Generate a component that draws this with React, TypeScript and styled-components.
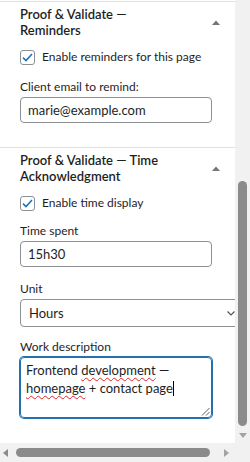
import React from 'react'
import styled, { createGlobalStyle } from 'styled-components'

const GlobalStyle = createGlobalStyle`
  html, body {
    margin: 0;
    padding: 0;
    background: #ffffff;
    overflow: hidden;
  }
  * {
    box-sizing: border-box;
  }
`

const FONT = `Lato, "Liberation Sans", sans-serif`
const TEXT = '#1e1e1e'
const BLUE = '#2271b1'

// scroll position of the sidebar, used for the fake scrollbars
const TRACK_V = 426
const THUMB_V_TOP = 181
const THUMB_H_WIDTH = 194

const Frame = styled.div`
  width: 250px;
  height: 462px;
  display: grid;
  grid-template-columns: 235px 15px;
  grid-template-rows: 443px 19px;
  background: #f1f1f1;
  font-family: ${FONT};
  color: ${TEXT};
`

const Viewport = styled.div`
  overflow: hidden;
  background: #ffffff;
  padding-top: 1px;
`

const Panel = styled.section`
  border-top: 1px solid #e0e0e0;
  padding: 4px 0 24px 20px;
  display: flex;
  flex-direction: column;
`

const Header = styled.div`
  display: flex;
  align-items: center;
  justify-content: space-between;
  padding-right: 15px;
`

const Title = styled.h2`
  margin: 0;
  max-width: 165px;
  font-size: 13px;
  line-height: 16px;
  font-weight: 600;
`

const CheckRow = styled.label`
  display: flex;
  align-items: center;
  gap: 7px;
  margin-top: 11px;
  font-size: 12px;
  line-height: 16px;
`

const CheckBox = styled.span`
  width: 15px;
  height: 15px;
  border: 1px solid #8c8f94;
  border-radius: 3px;
  background: #fff;
  display: flex;
  align-items: center;
  justify-content: center;
  flex: none;
`

const Field = styled.div<{ $top: number }>`
  display: flex;
  flex-direction: column;
  gap: 2px;
  margin-top: ${({ $top }) => $top}px;
`

const Label = styled.label`
  font-size: 12px;
  line-height: 16px;
`

const TextInput = styled.input`
  width: 192px;
  height: 26px;
  padding: 0 7px;
  border: 1px solid #8c8f94;
  border-radius: 4px;
  font-family: ${FONT};
  font-size: 13px;
  color: ${TEXT};
  background: #fff;
  outline: none;
`

const SelectWrap = styled.div`
  position: relative;
  width: 226px;
  flex: none;
`

const Select = styled.select`
  width: 226px;
  height: 28px;
  padding: 0 24px 0 8px;
  border: 1px solid #8c8f94;
  border-radius: 4px;
  font-family: ${FONT};
  font-size: 13px;
  color: ${TEXT};
  background: #fff;
  appearance: none;
  outline: none;
`

const Chevron = styled.svg`
  position: absolute;
  right: 11px;
  top: 12px;
  pointer-events: none;
`

const TextArea = styled.div`
  position: relative;
  width: 192px;
  height: 61px;
  padding: 3px 5px;
  border: 1px solid ${BLUE};
  box-shadow: 0 0 0 1px ${BLUE};
  border-radius: 4px;
  font-size: 13px;
  line-height: 18px;
`

const Misspelled = styled.span`
  text-decoration: underline wavy #e0242a;
  text-decoration-thickness: 1px;
  text-underline-offset: 2px;
`

const Caret = styled.span`
  display: inline-block;
  width: 1px;
  height: 15px;
  margin-bottom: -3px;
  background: #000;
`

const Grip = styled.svg`
  position: absolute;
  right: 1px;
  bottom: 1px;
`

const VScroll = styled.div`
  display: flex;
  flex-direction: column;
  align-items: center;
`

const VThumb = styled.div`
  width: 9px;
  border-radius: 5px;
  background: #8b8b8b;
`

const HScroll = styled.div`
  display: flex;
  align-items: center;
  padding-left: 3px;
`

const HThumb = styled.div`
  height: 9px;
  margin: 0 14px 0 8px;
  border-radius: 5px;
  background: #8b8b8b;
`

const Arrow = styled.svg<{ $gap?: number }>`
  flex: none;
  margin-top: ${({ $gap }) => $gap ?? 0}px;
`

const Corner = styled.div`
  background: #f1f1f1;
`

const CollapseIcon = () => (
  <svg width="8" height="5" viewBox="0 0 8 5">
    <polygon points="0,5 4,0.4 8,5" fill="#757575" />
  </svg>
)

const Check = ({ label }: { label: string }) => (
  <CheckRow>
    <CheckBox>
      <svg width="11" height="9" viewBox="0 0 11 9">
        <path d="M1 4.6 L4 7.5 L10 1" fill="none" stroke={BLUE} strokeWidth="1.6" />
      </svg>
    </CheckBox>
    {label}
  </CheckRow>
)

export default function App() {
  return (
    <>
      <GlobalStyle />
      <Frame>
        <Viewport>
          <Panel>
            <Header>
              <Title>Proof &amp; Validate — Reminders</Title>
              <CollapseIcon />
            </Header>
            <Check label="Enable reminders for this page" />
            <Field $top={14}>
              <Label htmlFor="remind-email">Client email to remind:</Label>
              <TextInput id="remind-email" defaultValue="marie@example.com" />
            </Field>
          </Panel>

          <Panel>
            <Header>
              <Title>Proof &amp; Validate — Time Acknowledgment</Title>
              <CollapseIcon />
            </Header>
            <Check label="Enable time display" />
            <Field $top={12}>
              <Label htmlFor="time-spent">Time spent</Label>
              <TextInput id="time-spent" defaultValue="15h30" />
            </Field>
            <Field $top={14}>
              <Label htmlFor="time-unit">Unit</Label>
              <SelectWrap>
                <Select id="time-unit" defaultValue="hours">
                  <option value="hours">Hours</option>
                  <option value="days">Days</option>
                </Select>
                <Chevron width="8" height="5" viewBox="0 0 8 5">
                  <path d="M0.5 0.5 L4 4 L7.5 0.5" fill="none" stroke="#50575e" strokeWidth="1.2" />
                </Chevron>
              </SelectWrap>
            </Field>
            <Field $top={12}>
              <Label>Work description</Label>
              <TextArea>
                Frontend <Misspelled>development</Misspelled> — <Misspelled>homepage</Misspelled> + contact page
                <Caret />
                <Grip width="9" height="9" viewBox="0 0 9 9">
                  <path d="M8.5 1 L1 8.5 M8.5 5 L5 8.5" stroke="#606060" strokeWidth="1" />
                </Grip>
              </TextArea>
            </Field>
          </Panel>
        </Viewport>

        <VScroll>
          <VThumb style={{ marginTop: THUMB_V_TOP, height: TRACK_V - THUMB_V_TOP }} />
          <Arrow $gap={7} width="8" height="5" viewBox="0 0 8 5">
            <polygon points="0,0 8,0 4,5" fill="#a3a3a3" />
          </Arrow>
        </VScroll>

        <HScroll>
          <Arrow width="5" height="8" viewBox="0 0 5 8">
            <polygon points="5,0 5,8 0,4" fill="#8b8b8b" />
          </Arrow>
          <HThumb style={{ width: THUMB_H_WIDTH }} />
          <Arrow width="5" height="8" viewBox="0 0 5 8">
            <polygon points="0,0 5,4 0,8" fill="#a3a3a3" />
          </Arrow>
        </HScroll>
        <Corner />
      </Frame>
    </>
  )
}
